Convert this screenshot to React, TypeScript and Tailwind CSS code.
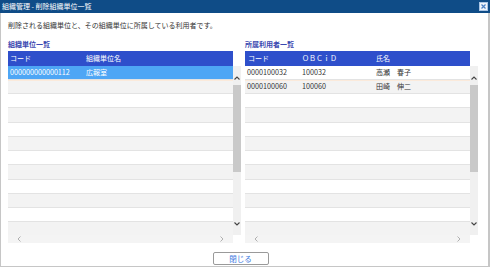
import React from "react";

const ROWS = 12;

function VScroll() {
  return (
    <div className="w-[8px] h-[169px] bg-[#f0f0f0] flex flex-col items-center relative">
      <svg className="absolute left-[1px] top-[10px]" width="6" height="4" viewBox="0 0 6 4">
        <polyline points="0.5,3.5 3,1 5.5,3.5" fill="none" stroke="#444" strokeWidth="1.1" />
      </svg>
      <div className="absolute left-[0px] top-[19px] w-[7.5px] h-[87px] bg-[#c9c9c9]" />
      <svg className="absolute left-[1px] top-[156px]" width="6" height="4" viewBox="0 0 6 4">
        <polyline points="0.5,0.5 3,3 5.5,0.5" fill="none" stroke="#444" strokeWidth="1.1" />
      </svg>
    </div>
  );
}

function HScroll() {
  return (
    <div className="w-[225px] h-[8px] bg-[#f4f4f4] flex items-center justify-between px-[9px]">
      <svg width="4" height="6" viewBox="0 0 4 6">
        <polyline points="3.5,0.5 1,3 3.5,5.5" fill="none" stroke="#b0b0b0" strokeWidth="1" />
      </svg>
      <svg width="4" height="6" viewBox="0 0 4 6">
        <polyline points="0.5,0.5 3,3 0.5,5.5" fill="none" stroke="#b0b0b0" strokeWidth="1" />
      </svg>
    </div>
  );
}

type Cell = { text: string; w: string; num?: boolean };

function Row({ idx, cells, selected }: { idx: number; cells?: Cell[]; selected?: boolean }) {
  const gray = idx % 2 === 1;
  const bg = selected ? "bg-[#4ea6f5] text-white" : gray ? "bg-[#f3f3f3] text-[#333]" : "bg-white text-[#333]";
  return (
    <div
      className={`h-[14.25px] shrink-0 flex items-center border-b border-[#e3e3e3] ${bg} ${idx === 1 ? "border-t border-t-[#fbeadb]" : ""}`}
    >
      {cells?.map((c, i) => (
        <div
          key={i}
          className={`${c.w} shrink-0 whitespace-nowrap leading-none ${c.num ? "text-[7.2px]" : "text-[7px]"}`}
        >
          {c.text}
        </div>
      ))}
    </div>
  );
}

function Panel({
  label,
  headers,
  rows,
  selectedFirst,
}: {
  label: string;
  headers: Cell[];
  rows: Cell[][];
  selectedFirst?: boolean;
}) {
  return (
    <div className="w-[233px] flex flex-col">
      <div className="h-[11px] text-[7px] leading-[11px] font-bold text-[#3a47b0] mb-[1px]">{label}</div>
      <div className="flex">
        <div className="w-[225px] h-[14.5px] bg-[#2e4fcb] text-white flex items-center">
          {headers.map((h, i) => (
            <div key={i} className={`${h.w} shrink-0 text-[7px] leading-none whitespace-nowrap`}>
              {h.text}
            </div>
          ))}
        </div>
      </div>
      <div className="flex">
        <div className="w-[225px] h-[169px] overflow-hidden flex flex-col">
          {Array.from({ length: ROWS }).map((_, i) => (
            <Row key={i} idx={i} cells={rows[i]} selected={selectedFirst && i === 0} />
          ))}
        </div>
        <VScroll />
      </div>
      <HScroll />
    </div>
  );
}

export default function App() {
  const leftHeaders: Cell[] = [
    { text: "コード", w: "w-[78px] pl-[2px]" },
    { text: "組織単位名", w: "w-[140px]" },
  ];
  const leftRows: Cell[][] = [
    [
      { text: "000000000000112", w: "w-[78px] pl-[2px]", num: true },
      { text: "広報室", w: "w-[140px]" },
    ],
  ];
  const rightHeaders: Cell[] = [
    { text: "コード", w: "w-[57px] pl-[3px]" },
    { text: "ＯＢＣｉＤ", w: "w-[74px]" },
    { text: "氏名", w: "w-[80px]" },
  ];
  const rightRows: Cell[][] = [
    [
      { text: "0000100032", w: "w-[57px] pl-[2px]", num: true },
      { text: "100032", w: "w-[74px]", num: true },
      { text: "高瀬　春子", w: "w-[80px]" },
    ],
    [
      { text: "0000100060", w: "w-[57px] pl-[2px]", num: true },
      { text: "100060", w: "w-[74px]", num: true },
      { text: "田崎　伸二", w: "w-[80px]" },
    ],
  ];

  return (
    <div className="w-[490px] h-[269px] bg-white flex flex-col font-['Noto_Sans_CJK_JP','Noto_Sans',sans-serif]">
      <div className="h-[12.5px] shrink-0 bg-[#0f4c87] flex items-center justify-between pl-[2px] pr-[2px]">
        <span className="text-white text-[7px] leading-none whitespace-nowrap">組織管理 - 削除組織単位一覧</span>
        <div className="w-[9px] h-[9px] bg-[#eef4fb] border border-[#a9c4e4] flex items-center justify-center">
          <svg width="5" height="5" viewBox="0 0 5 5">
            <path d="M0.5 0.5 L4.5 4.5 M4.5 0.5 L0.5 4.5" stroke="#4a80c4" strokeWidth="1.2" />
          </svg>
        </div>
      </div>
      <div className="h-[254.5px] border-l border-r-2 border-b border-[#c6c6c6] flex flex-col">
        <div className="pl-[7px] pt-[7px] h-[26.5px] text-[7px] leading-[10px] text-[#333] whitespace-nowrap">
          削除される組織単位と、その組織単位に所属している利用者です。
        </div>
        <div className="flex gap-[4px] pl-[7px]">
          <Panel label="組織単位一覧" headers={leftHeaders} rows={leftRows} selectedFirst />
          <Panel label="所属利用者一覧" headers={rightHeaders} rows={rightRows} />
        </div>
        <div className="flex justify-center pr-[8px] mt-[9px]">
          <button className="w-[56px] h-[13.5px] bg-white border border-[#9a9a9a] rounded-[2px] text-[#3b78e0] text-[7.5px] leading-none flex items-center justify-center">
            閉じる
          </button>
        </div>
      </div>
    </div>
  );
}
